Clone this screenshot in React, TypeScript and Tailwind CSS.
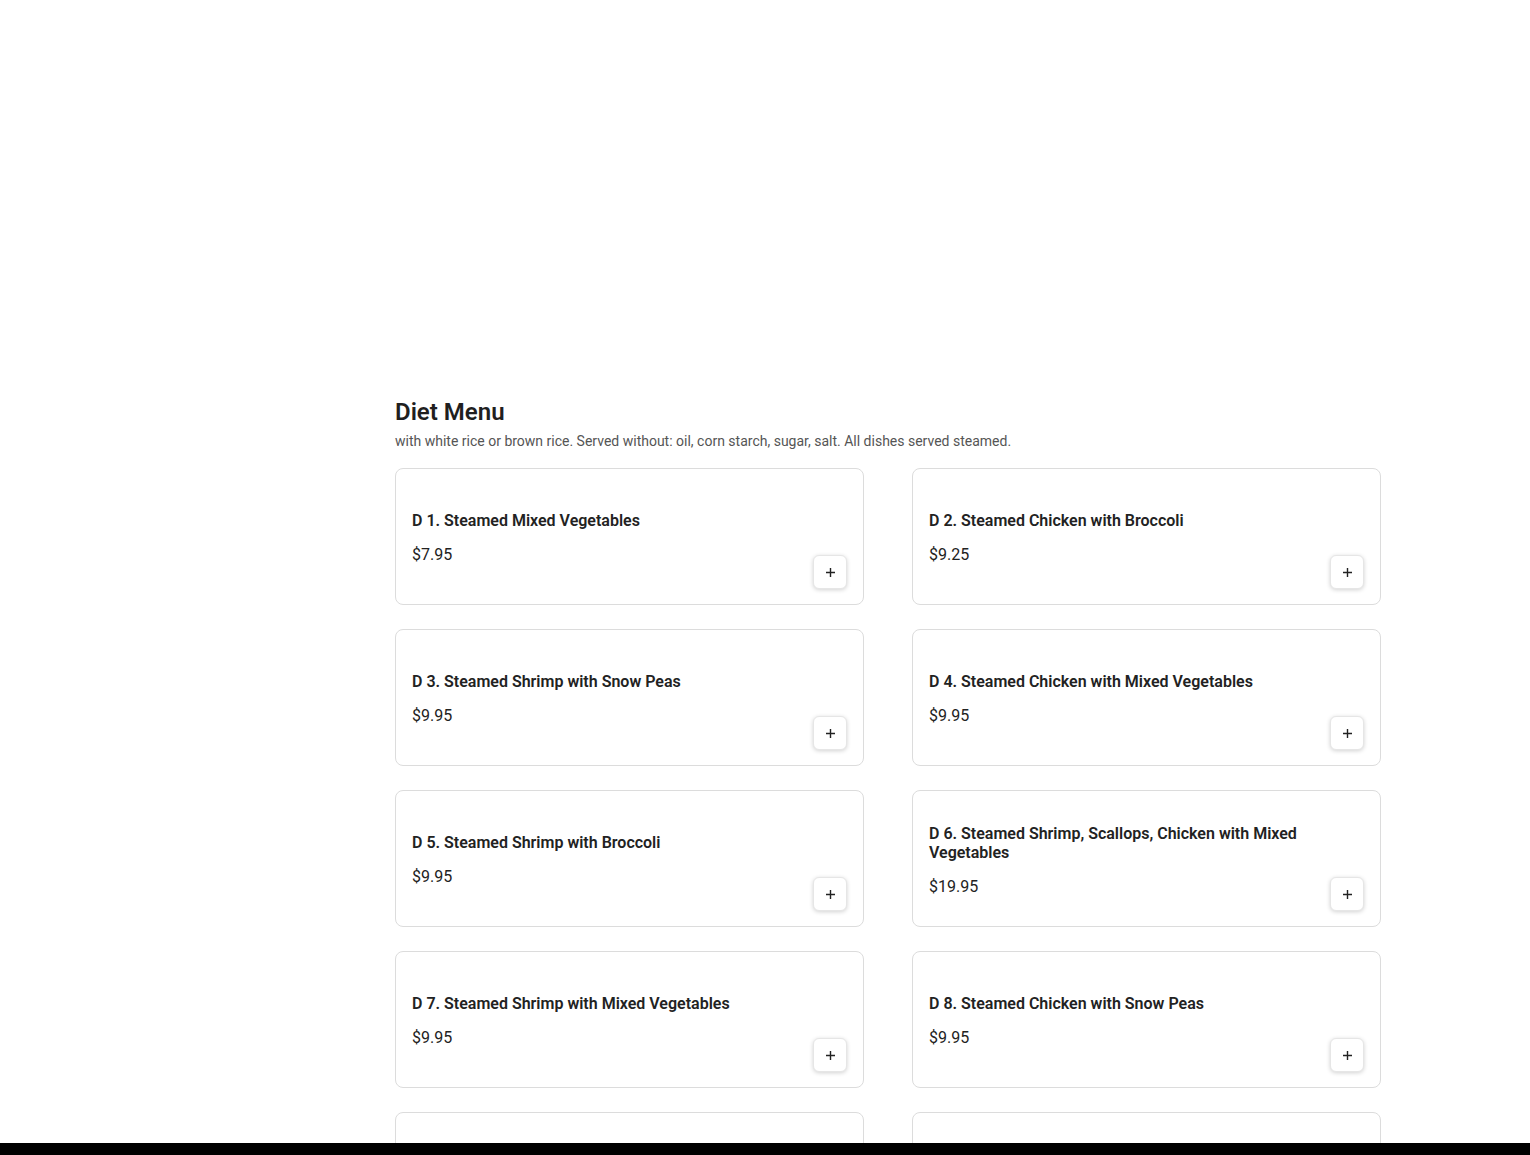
const items = [
  { name: "D 1. Steamed Mixed Vegetables", price: "$7.95" },
  { name: "D 2. Steamed Chicken with Broccoli", price: "$9.25" },
  { name: "D 3. Steamed Shrimp with Snow Peas", price: "$9.95" },
  { name: "D 4. Steamed Chicken with Mixed Vegetables", price: "$9.95" },
  { name: "D 5. Steamed Shrimp with Broccoli", price: "$9.95" },
  { name: "D 6. Steamed Shrimp, Scallops, Chicken with Mixed Vegetables", price: "$19.95" },
  { name: "D 7. Steamed Shrimp with Mixed Vegetables", price: "$9.95" },
  { name: "D 8. Steamed Chicken with Snow Peas", price: "$9.95" },
  { name: "D 9. Steamed Scallops with Broccoli", price: "$10.95" },
  { name: "D 10. Steamed Bean Curd with Mixed Vegetables", price: "$8.95" },
];

function PlusIcon() {
  return (
    <svg width="11" height="11" viewBox="0 0 11 11" fill="none">
      <path d="M5.5 1v9M1 5.5h9" stroke="#222" strokeWidth="1.4" />
    </svg>
  );
}

function ItemCard({ name, price }: { name: string; price: string }) {
  return (
    <div className="relative h-[137px] rounded-lg border border-[#dcdcdc] bg-white flex flex-col justify-center pl-4 pr-20 pt-[5px]">
      <div className="text-[16px] leading-[19px] font-semibold text-[#222]">{name}</div>
      <div className="mt-[13px] text-[16px] leading-6 text-[#222]">{price}</div>
      <button className="absolute right-4 bottom-[15px] w-[34px] h-[34px] rounded-md border border-[#e6e6e6] bg-white shadow-[0_1px_4px_rgba(0,0,0,0.18)] flex items-center justify-center">
        <PlusIcon />
      </button>
    </div>
  );
}

export default function App() {
  return (
    <div className="min-h-screen bg-white font-['Roboto','Liberation_Sans',sans-serif]">
      <div className="ml-[395px] w-[986px] pt-[396px] pb-10">
        <h2 className="text-[24px] leading-8 font-semibold text-[#1f1f1f]">Diet Menu</h2>
        <p className="mt-[3px] text-[14px] leading-5 text-[#555]">
          with white rice or brown rice. Served without: oil, corn starch, sugar, salt. All dishes served steamed.
        </p>
        <div className="mt-[17px] grid grid-cols-2 gap-x-12 gap-y-6">
          {items.map((it) => (
            <ItemCard key={it.name} name={it.name} price={it.price} />
          ))}
        </div>
      </div>
      <div className="fixed bottom-0 left-0 right-0 h-3 bg-black" />
    </div>
  );
}
